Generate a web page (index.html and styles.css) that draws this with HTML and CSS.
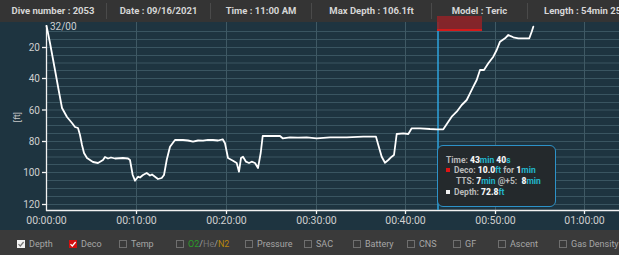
FILE: index.html
```html
<!DOCTYPE html>
<html>
<head>
<meta charset="utf-8">
<link rel="stylesheet" href="styles.css">
</head>
<body>
<div class="app">
  <div class="header">
    <div class="cell">Dive number&nbsp;:&nbsp;2053</div>
    <div class="cell">Date&nbsp;:&nbsp;09/16/2021</div>
    <div class="cell">Time&nbsp;:&nbsp;11:00 AM</div>
    <div class="cell">Max Depth&nbsp;:&nbsp;106.1ft</div>
    <div class="cell">Model&nbsp;:&nbsp;Teric</div>
    <div class="cell last">Length&nbsp;:&nbsp;54min 25s</div>
  </div>

  <div class="deco-marker"></div>

  <div class="chart">
    <svg class="plot" width="619" height="208" viewBox="0 22 619 208" xmlns="http://www.w3.org/2000/svg">
      <g class="hgrid">
        <line x1="46" x2="619" y1="31.5" y2="31.5"/>
        <line x1="46" x2="619" y1="39.5" y2="39.5"/>
        <line x1="46" x2="619" y1="47.5" y2="47.5"/>
        <line x1="46" x2="619" y1="55.5" y2="55.5"/>
        <line x1="46" x2="619" y1="63" y2="63"/>
        <line x1="46" x2="619" y1="70.5" y2="70.5"/>
        <line x1="46" x2="619" y1="78.5" y2="78.5"/>
        <line x1="46" x2="619" y1="86.5" y2="86.5"/>
        <line x1="46" x2="619" y1="94.5" y2="94.5"/>
        <line x1="46" x2="619" y1="102.5" y2="102.5"/>
        <line x1="46" x2="619" y1="110" y2="110"/>
        <line x1="46" x2="619" y1="117.5" y2="117.5"/>
        <line x1="46" x2="619" y1="125.5" y2="125.5"/>
        <line x1="46" x2="619" y1="133.5" y2="133.5"/>
        <line x1="46" x2="619" y1="141.5" y2="141.5"/>
        <line x1="46" x2="619" y1="149.5" y2="149.5"/>
        <line x1="46" x2="619" y1="157" y2="157"/>
        <line x1="46" x2="619" y1="164.5" y2="164.5"/>
        <line x1="46" x2="619" y1="172.5" y2="172.5"/>
        <line x1="46" x2="619" y1="180.5" y2="180.5"/>
        <line x1="46" x2="619" y1="188.5" y2="188.5"/>
        <line x1="46" x2="619" y1="196.5" y2="196.5"/>
        <line x1="46" x2="619" y1="204.5" y2="204.5"/>
      </g>
      <g class="vgrid">
        <line x1="136.5" x2="136.5" y1="22" y2="210"/>
        <line x1="226.5" x2="226.5" y1="22" y2="210"/>
        <line x1="316.5" x2="316.5" y1="22" y2="210"/>
        <line x1="405.5" x2="405.5" y1="22" y2="210"/>
        <line x1="495.5" x2="495.5" y1="22" y2="210"/>
        <line x1="584.5" x2="584.5" y1="22" y2="210"/>
      </g>

      <g class="axis">
        <line x1="46.5" x2="46.5" y1="25" y2="211"/>
        <line x1="46" x2="619" y1="210.5" y2="210.5"/>
        <line x1="42" x2="46" y1="47.5" y2="47.5"/>
        <line x1="42" x2="46" y1="78.5" y2="78.5"/>
        <line x1="42" x2="46" y1="110" y2="110"/>
        <line x1="42" x2="46" y1="141.5" y2="141.5"/>
        <line x1="42" x2="46" y1="172.5" y2="172.5"/>
        <line x1="42" x2="46" y1="204.5" y2="204.5"/>
        <line x1="136.5" x2="136.5" y1="210" y2="214"/>
        <line x1="226.5" x2="226.5" y1="210" y2="214"/>
        <line x1="316.5" x2="316.5" y1="210" y2="214"/>
        <line x1="405.5" x2="405.5" y1="210" y2="214"/>
        <line x1="495.5" x2="495.5" y1="210" y2="214"/>
        <line x1="584.5" x2="584.5" y1="210" y2="214"/>
      </g>

      <g class="ylabels">
        <text x="40" y="51">20</text>
        <text x="40" y="82">40</text>
        <text x="40" y="113.5">60</text>
        <text x="40" y="145">80</text>
        <text x="40" y="176">100</text>
        <text x="40" y="207.5">120</text>
      </g>
      <text class="unit" x="0" y="0" transform="translate(20 117) rotate(-90)">[ft]</text>

      <g class="xlabels">
        <text x="46.5" y="224">00:00:00</text>
        <text x="136.5" y="224">00:10:00</text>
        <text x="226.5" y="224">00:20:00</text>
        <text x="316.5" y="224">00:30:00</text>
        <text x="405.5" y="224">00:40:00</text>
        <text x="495.5" y="224">00:50:00</text>
        <text x="584.5" y="224">01:00:00</text>
      </g>

      <text class="mix" x="50" y="30">32/00</text>

      <line class="cursor" x1="438" x2="438" y1="22" y2="210"/>

      <path class="profile" d="M46.5,26 L47,28.3 L50,43 L55,70 L59,92 L62,108 L67,117 L72,123 L75,127 L78,128 L80,135 L82,145 L84,153 L87,158 L90,160 L93,162 L98,163 L103,160 L105,157 L108,158.5 L111,157.5 L115,158.5 L123,158 L128,158.5 L130,160 L132.7,175 L135,180.7 L138,176.7 L140,177.5 L143,175 L146.7,173 L150,175.5 L152,174.5 L155,176.7 L158,179 L161.7,178 L164,175 L166.7,160 L170,146.7 L175,140 L183,140 L188,140.5 L193,141.7 L198,140.5 L203,140.7 L208,139.8 L213,140 L218,140.5 L222.7,139.3 L225,143.3 L228,158 L233,160.7 L236.7,163 L239,171.7 L241,158 L243,156.7 L246,161.7 L249,163 L251.7,161.7 L255,163 L258,168 L260.7,153 L262.7,136 L270,136 L280,136 L282.7,138.3 L290,137.3 L298,137.6 L306.7,137.3 L316.7,138.3 L330,137.3 L346.7,137.3 L363.3,136.7 L376,136.7 L378.3,145 L381.7,156.7 L385,162.7 L388.3,160 L391.7,156.7 L394,155 L396.7,134 L403.3,133.3 L408.3,134 L411.7,128.3 L420,128.3 L430,129 L436.7,129.3 L443.3,129.3 L448.3,121.7 L451.7,116.7 L456.7,111.7 L461.7,105 L466.7,100 L470,93.3 L473.3,86.7 L476.7,80 L480,70 L484,70 L488.3,63.3 L493.3,56.7 L496.7,50 L500,41.7 L505,38.3 L508.3,35 L513.3,37.3 L518.3,38.3 L523.3,38.3 L529.3,38.3 L531.7,31.7 L533.3,26.7"/>
    </svg>

    <div class="tooltip">
      <div class="tip-row"><span class="lbl">Time: </span><b>43</b><span class="u">min</span> <b>40</b><span class="u">s</span></div>
      <div class="tip-row"><span class="sq red"></span><span class="lbl">Deco: </span><b>10.0</b><span class="u">ft</span><span class="lbl"> for </span><b>1</b><span class="u">min</span></div>
      <div class="tip-row indent"><span class="lbl">TTS: </span><b>7</b><span class="u">min</span><span class="lbl"> @+5:&nbsp; </span><b>8</b><span class="u">min</span></div>
      <div class="tip-row"><span class="sq white"></span><span class="lbl">Depth: </span><b>72.8</b><span class="u">ft</span></div>
    </div>
  </div>

  <div class="footer">
    <label class="opt"><span class="box checked"><svg viewBox="0 0 8 8"><path d="M1.5 4.2 L3.3 6 L6.6 2" fill="none" stroke="#777" stroke-width="1.2"/></svg></span>Depth</label>
    <label class="opt"><span class="box deco"><svg viewBox="0 0 8 8"><path d="M1.5 4.2 L3.3 6 L6.6 2" fill="none" stroke="#fff" stroke-width="1.2"/></svg></span>Deco</label>
    <label class="opt"><span class="box"></span>Temp</label>
    <label class="opt"><span class="box"></span><span class="o2">O2</span>/<span class="he">He</span>/<span class="n2">N2</span></label>
    <label class="opt"><span class="box"></span>Pressure</label>
    <label class="opt"><span class="box"></span>SAC</label>
    <label class="opt"><span class="box"></span>Battery</label>
    <label class="opt"><span class="box"></span>CNS</label>
    <label class="opt"><span class="box"></span>GF</label>
    <label class="opt"><span class="box"></span>Ascent</label>
    <label class="opt"><span class="box"></span>Gas Density</label>
  </div>
</div>
</body>
</html>
```
FILE: styles.css
```css
html, body {
  margin: 0;
  padding: 0;
  background: #1e3440;
}
body {
  width: 619px;
  height: 255px;
  overflow: hidden;
  font-family: Roboto, "Liberation Sans", sans-serif;
}
.app {
  position: relative;
  width: 619px;
  height: 255px;
  display: flex;
  flex-direction: column;
}
.header {
  height: 22px;
  background: #343434;
  display: grid;
  grid-template-columns: 107px 104px 101px 120px 96px 1fr;
  align-items: center;
  color: #d6d6d6;
  font-size: 9.5px;
  font-weight: bold;
  white-space: nowrap;
  overflow: hidden;
}
.cell {
  height: 16px;
  line-height: 16px;
  text-align: center;
  border-right: 1px solid #4a4a4a;
  overflow: hidden;
}
.cell.last {
  border-right: none;
  text-align: left;
  padding-left: 16px;
}
.deco-marker {
  position: absolute;
  left: 437px;
  top: 16px;
  width: 45px;
  height: 13px;
  background: rgba(140, 36, 40, 0.92);
  border-bottom: 2px solid #d41a1a;
  z-index: 2;
}
.chart {
  position: relative;
  height: 208px;
  background: #1e3440;
}
.plot {
  display: block;
}
.hgrid line {
  stroke: #3a5561;
  stroke-width: 1;
}
.vgrid line {
  stroke: #3f5964;
  stroke-width: 1;
}
.axis line {
  stroke: #f2f2f2;
  stroke-width: 1.3;
}
.ylabels text {
  fill: #cfcfcf;
  font-size: 10px;
  text-anchor: end;
}
.xlabels text {
  fill: #cfcfcf;
  font-size: 10.5px;
  text-anchor: middle;
}
.unit {
  fill: #c8c8c8;
  font-size: 8.5px;
  text-anchor: middle;
}
.mix {
  fill: #d0d0d0;
  font-size: 10px;
}
.cursor {
  stroke: #2ea3de;
  stroke-width: 1.5;
}
.profile {
  fill: none;
  stroke: #ffffff;
  stroke-width: 1.8;
  stroke-linejoin: round;
  stroke-linecap: round;
}
.tooltip {
  position: absolute;
  left: 437px;
  top: 123px;
  width: 119px;
  height: 62px;
  box-sizing: border-box;
  border: 1.5px solid #2d92c8;
  border-radius: 6px;
  background: #24292c;
  display: flex;
  flex-direction: column;
  justify-content: center;
  padding-left: 8px;
  font-size: 8.5px;
  font-weight: bold;
  line-height: 10.7px;
  white-space: nowrap;
}
.tip-row {
  display: block;
}
.tip-row.indent {
  padding-left: 10px;
}
.lbl {
  color: #b9b9b9;
  white-space: pre;
}
.tip-row b {
  color: #f4f4f4;
}
.u {
  color: #22b6cc;
}
.sq {
  display: inline-block;
  width: 4px;
  height: 4px;
  margin-right: 4px;
  vertical-align: 1px;
}
.sq.red {
  background: #e01414;
}
.sq.white {
  background: #f0f0f0;
}
.footer {
  flex: 1;
  background: #3a3a3a;
  display: grid;
  grid-template-columns: 52px 50px 57px 69px 59px 49px 54px 46px 45px 61px auto;
  align-items: center;
  padding-left: 17px;
  padding-top: 2px;
  font-size: 9px;
  color: #a6a6a6;
  white-space: nowrap;
}
.opt {
  display: flex;
  align-items: center;
}
.box {
  width: 8px;
  height: 8px;
  box-sizing: border-box;
  border: 1px solid #6f6f6f;
  margin-right: 4px;
  display: flex;
}
.box svg {
  width: 8px;
  height: 8px;
  display: block;
}
.box.checked {
  background: #f2f2f2;
  border-color: #f2f2f2;
}
.box.checked svg, .box.deco svg {
  margin: -1px;
}
.box.deco {
  background: #d40f0f;
  border-color: #d40f0f;
}
.o2 { color: #2a9a2a; }
.he { color: #777777; }
.n2 { color: #b8860b; }
```
